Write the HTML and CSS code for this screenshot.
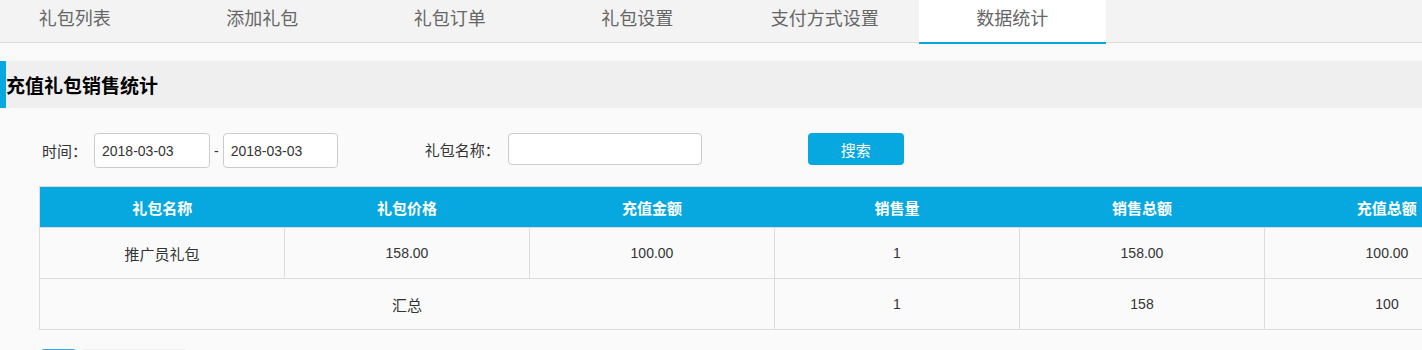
FILE: index.html
```html
<!DOCTYPE html>
<html lang="zh-CN">
<head>
<meta charset="utf-8">
<title>数据统计</title>
<link rel="stylesheet" href="styles.css">
</head>
<body>
<div class="viewport">
  <div class="canvas">
    <nav class="tabs">
      <ul class="tabs-list">
        <li class="tab">礼包列表</li>
        <li class="tab">添加礼包</li>
        <li class="tab">礼包订单</li>
        <li class="tab">礼包设置</li>
        <li class="tab">支付方式设置</li>
        <li class="tab active">数据统计</li>
      </ul>
    </nav>

    <section class="panel">
      <h3 class="panel-title">充值礼包销售统计</h3>

      <form class="filters">
        <div class="field field-time">
          <span class="field-label">时间：</span>
          <input class="input input-date" type="text" value="2018-03-03">
          <span class="dash">-</span>
          <input class="input input-date input-date-end" type="text" value="2018-03-03">
        </div>
        <div class="field field-name">
          <span class="field-label field-label-name">礼包名称：</span>
          <input class="input input-name" type="text" value="">
        </div>
        <button class="btn-search" type="button">搜索</button>
      </form>

      <table class="stats">
        <thead>
          <tr>
            <th>礼包名称</th>
            <th>礼包价格</th>
            <th>充值金额</th>
            <th>销售量</th>
            <th>销售总额</th>
            <th>充值总额</th>
          </tr>
        </thead>
        <tbody>
          <tr>
            <td class="cjk">推广员礼包</td>
            <td>158.00</td>
            <td>100.00</td>
            <td>1</td>
            <td>158.00</td>
            <td>100.00</td>
          </tr>
          <tr>
            <td class="cjk" colspan="3">汇总</td>
            <td>1</td>
            <td>158</td>
            <td>100</td>
          </tr>
        </tbody>
      </table>

      <div class="pager">
        <span class="pager-btn"></span>
        <span class="pager-box"></span>
      </div>
    </section>
  </div>
</div>
</body>
</html>
```

FILE: styles.css
```css
html, body {
  margin: 0;
  padding: 0;
}

body {
  background: #fafafa;
  color: #333;
  font-family: "Liberation Sans", "Noto Sans CJK SC", sans-serif;
  font-size: 14px;
}

.viewport {
  width: 100%;
  height: 350px;
  overflow: hidden;
}

.canvas {
  width: 1549px;
}

/* Tabs */
.tabs {
  height: 42px;
  background: #f3f3f3;
  border-bottom: 1px solid #dcdcdc;
}

.tabs-list {
  display: flex;
  align-items: flex-start;
  margin: 0 0 0 -19px;
  padding: 0;
  list-style: none;
}

.tab {
  flex: none;
  width: 187.5px;
  height: 42px;
  line-height: 35px;
  text-align: center;
  font-family: "Noto Sans CJK SC", sans-serif;
  font-size: 18px;
  color: #666;
}

.tab.active {
  background: #fff;
  border-bottom: 2px solid #07a8e0;
}

/* Panel */
.panel-title {
  margin: 18px 0 0;
  height: 47px;
  line-height: 47px;
  background: #efefef;
  border-left: 6px solid #07a8e0;
  font-family: "Noto Sans CJK SC", sans-serif;
  font-size: 19px;
  font-weight: bold;
  color: #000;
}

/* Filters */
.filters {
  display: flex;
  align-items: flex-start;
  margin: 25px 0 0;
  padding-left: 42px;
}

.field {
  display: flex;
  align-items: center;
}

.field-label {
  font-family: "Noto Sans CJK SC", sans-serif;
  font-size: 15px;
  color: #333;
  margin-right: 7px;
}

.input {
  box-sizing: border-box;
  border: 1px solid #ccc;
  border-radius: 4px;
  background: #fff;
  font-family: "Liberation Sans", sans-serif;
  font-size: 14px;
  color: #333;
  outline: none;
}

.input-date {
  width: 116px;
  height: 35px;
  padding: 0 7px;
}

.input-date-end {
  width: 115px;
}

.dash {
  margin: 0 4px;
  font-size: 14px;
}

.field-name {
  margin-left: 87px;
}

.field-label-name {
  margin-right: 8px;
}

.input-name {
  width: 194px;
  height: 32px;
  padding: 0 7px;
}

.btn-search {
  margin-left: 106px;
  width: 96px;
  height: 32px;
  border: none;
  border-radius: 4px;
  background: #07a8e0;
  color: #fff;
  font-family: "Noto Sans CJK SC", sans-serif;
  font-size: 15px;
  padding: 0;
}

/* Table */
.stats {
  margin: 18px 0 0 39px;
  width: 1471px;
  table-layout: fixed;
  border-collapse: collapse;
  border: 1px solid #dcdcdc;
}

.stats th {
  height: 40px;
  padding: 0;
  background: #07a8e0;
  color: #fff;
  font-family: "Noto Sans CJK SC", sans-serif;
  font-size: 15px;
  font-weight: bold;
  text-align: center;
  border: none;
}

.stats td {
  height: 50px;
  padding: 0;
  border: 1px solid #dcdcdc;
  text-align: center;
  font-size: 14px;
  color: #333;
}

.stats td.cjk {
  font-family: "Noto Sans CJK SC", sans-serif;
  font-size: 15px;
}

/* Pager */
.pager {
  display: flex;
  gap: 7px;
  margin: 19px 0 0 41px;
}

.pager-btn {
  width: 35px;
  height: 30px;
  border-radius: 3px;
  background: #3ea8e0;
}

.pager-box {
  width: 102px;
  height: 30px;
  background: #eee;
}
```
